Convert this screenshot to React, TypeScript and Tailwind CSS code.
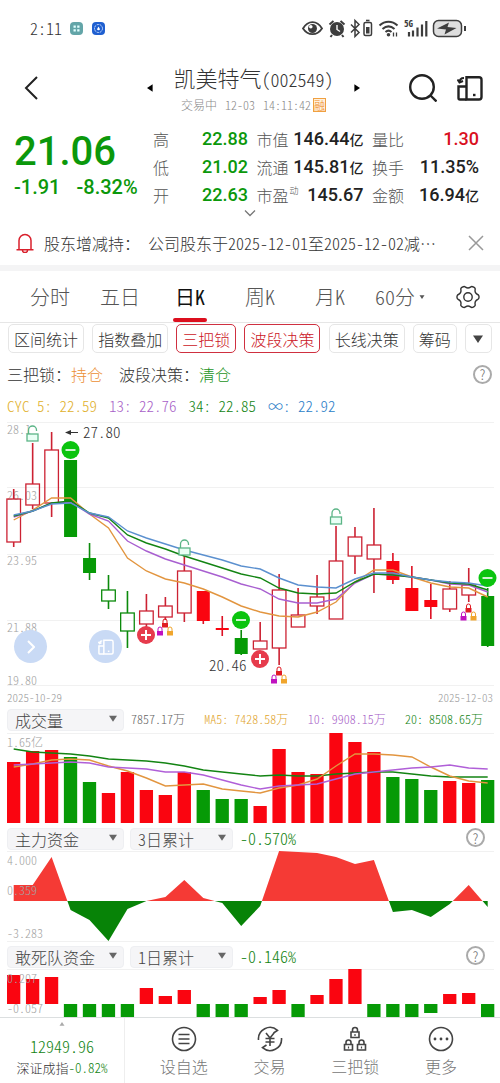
import { useState } from "react";
import type { ReactNode } from "react";

const RED = "#fa0510";
const GREEN = "#069a06";

// [high, top, bottom, low, kind], one entry for each trading day
type Kind = "up" | "down" | "upFill" | "downFill";
type Candle = [number, number, number, number, Kind];

const candles: Candle[] = [
  [489, 499, 542, 547, "up"],
  [443, 484, 505, 509, "up"],
  [432, 450, 503, 517, "up"],
  [460, 460, 537, 537, "downFill"],
  [543, 558, 573, 580, "downFill"],
  [575, 590, 601, 609, "down"],
  [591, 613, 631, 648, "down"],
  [594, 611, 624, 628, "up"],
  [597, 606, 617, 620, "up"],
  [556, 571, 613, 622, "up"],
  [591, 591, 621, 624, "upFill"],
  [616, 628, 630, 636, "upFill"],
  [630, 638, 654, 655, "downFill"],
  [622, 641, 649, 649, "up"],
  [574, 590, 648, 665, "up"],
  [588, 615, 627, 627, "up"],
  [575, 597, 606, 614, "up"],
  [526, 561, 619, 619, "up"],
  [527, 537, 556, 574, "up"],
  [508, 545, 559, 593, "up"],
  [553, 561, 580, 584, "upFill"],
  [566, 588, 611, 611, "upFill"],
  [584, 600, 607, 619, "upFill"],
  [581, 589, 609, 612, "up"],
  [568, 585, 595, 602, "up"],
  [588, 596, 646, 647, "downFill"],
];

const priceLines = [
  { color: "#e2953f", ys: [520, 510, 498, 498, 514, 528, 558, 571, 579, 583, 589, 597, 606, 612, 616, 617, 612, 602, 582, 570, 570, 577, 583, 587, 588, 597] },
  { color: "#a85fd0", ys: [517, 511, 503, 502, 514, 521, 541, 551, 559, 565, 571, 577, 584, 589, 599, 603, 603, 599, 583, 574, 575, 577, 580, 584, 585, 592] },
  { color: "#138413", ys: [516, 511, 503, 501, 513, 518, 535, 543, 549, 556, 562, 568, 574, 578, 588, 593, 594, 593, 582, 574, 575, 577, 580, 583, 584, 590] },
  { color: "#5b90cf", ys: [515, 511, 504, 503, 513, 517, 531, 538, 544, 550, 555, 560, 566, 569, 578, 585, 587, 588, 579, 573, 573, 577, 580, 582, 583, 586] },
];

const volumeTops = [762, 751, 750, 757, 782, 793, 772, 790, 795, 772, 790, 799, 799, 806, 749, 772, 774, 733, 742, 752, 777, 779, 790, 781, 783, 780];
const volumeDown = [3, 4, 10, 11, 12, 20, 21, 22, 25];
const volumeLines = [
  { color: "#138413", ys: [749, 752, 753, 754, 756, 759, 760, 761, 763, 766, 770, 772, 774, 776, 775, 776, 776, 774, 773, 772, 772, 774, 776, 777, 777, 777] },
  { color: "#e2953f", ys: [767, 764, 760, 759, 760, 766, 771, 778, 786, 785, 784, 789, 791, 793, 788, 785, 779, 766, 754, 754, 755, 757, 767, 776, 781, 783] },
  { color: "#b05fd8", ys: [765, 764, 763, 762, 763, 767, 768, 769, 772, 772, 775, 780, 785, 789, 786, 785, 784, 779, 774, 772, 770, 768, 767, 765, 768, 769] },
];

const fundYs = [885, 885, 857, 910, 920, 941, 909, 901, 897, 880, 898, 903, 926, 906, 851, 852, 853, 857, 864, 860, 912, 910, 917, 904, 885, 907];
const squadYs = [975, 979, 977, 1017, 1017, 1017, 1017, 988, 996, 990, 1017, 1017, 1017, 997, 990, 1017, 995, 979, 969, 1017, 1017, 1017, 1013, 994, 993, 1017];

const dayX = (i: number) => 13.7 + i * 18.96;
const toPoints = (ys: number[]) =>
  ys.map((y, i) => `${dayX(i).toFixed(1)},${y}`).join(" ");

const Trend = ({ ys, color }: { ys: number[]; color: string }) => (
  <polyline points={toPoints(ys)} fill="none" stroke={color} strokeWidth="1.4" />
);

const GridLine = ({ y }: { y: number }) => (
  <path d={`M7 ${y}.5H494`} stroke="#f1f1f1" strokeWidth="1" />
);

const AxisText = ({ y, children }: { y: number; children: ReactNode }) => (
  <text x="7" y={y} fontSize="12" fill="#a3a3a3">
    {children}
  </text>
);

const OpenLock = ({ x, y }: { x: number; y: number }) => (
  <g transform={`translate(${x} ${y})`} fill="none" stroke="#5cb587" strokeWidth="1.3">
    <path d="M-4 0v-4a4 4 0 0 1 8 0v1" />
    <rect x="-5.5" y="0" width="11" height="7" fill="#e9fff5" />
  </g>
);

const SmallLock = ({ x, y, color }: { x: number; y: number; color: string }) => (
  <g transform={`translate(${x} ${y})`}>
    <path d="M-2 0v-2a2 2 0 0 1 4 0v2" fill="none" stroke={color} strokeWidth="1" />
    <rect x="-3" y="0" width="6" height="4.5" fill={color} />
  </g>
);

const TripleLock = ({ x, y }: { x: number; y: number }) => (
  <g>
    <SmallLock x={x} y={y - 4} color="#e01c24" />
    <SmallLock x={x - 5} y={y + 4} color="#c012c0" />
    <SmallLock x={x + 5} y={y + 4} color="#f0a52c" />
  </g>
);

const Signal = ({ x, y, buy }: { x: number; y: number; buy?: boolean }) => (
  <g transform={`translate(${x} ${y})`}>
    <circle r="9" fill={buy ? "#e63b4c" : "#0bc40f"} />
    <path
      d={buy ? "M-5 0H5M0-5V5" : "M-5 0H5"}
      stroke="#fff"
      strokeWidth={buy ? 2 : 1.6}
      fill="none"
    />
  </g>
);

const CandleChart = () => (
  <svg viewBox="0 418 500 272" className="block w-full">
    {[422, 487, 554, 620, 685].map((y) => (
      <GridLine key={y} y={y} />
    ))}
    <AxisText y={434}>28.1</AxisText>
    <AxisText y={500}>26.03</AxisText>
    <AxisText y={565}>23.95</AxisText>
    <AxisText y={632}>21.88</AxisText>
    <AxisText y={685}>19.80</AxisText>
    {candles.map(([high, top, bottom, low, kind], i) => {
      const x = dayX(i);
      const up = kind.startsWith("up");
      const filled = kind.endsWith("Fill");
      const stroke = up ? (filled ? "#dd1023" : "#cc2233") : "#0b8a0b";
      return (
        <g key={i}>
          <path
            d={`M${x} ${high}V${top}M${x} ${bottom}V${low}`}
            stroke={stroke}
            strokeWidth="1.6"
          />
          {filled ? (
            <rect x={x - 6.5} y={top} width="13" height={bottom - top} fill={up ? RED : GREEN} />
          ) : (
            <rect
              x={x - 6.8}
              y={top}
              width="13.6"
              height={bottom - top}
              fill="none"
              stroke={stroke}
              strokeWidth="1.3"
            />
          )}
        </g>
      );
    })}
    {priceLines.map((line) => (
      <Trend key={line.color} {...line} />
    ))}
    <OpenLock x={32.5} y={434} />
    <OpenLock x={184.5} y={548} />
    <OpenLock x={336} y={517} />
    <TripleLock x={165} y={627} />
    <TripleLock x={279} y={675} />
    <TripleLock x={468.5} y={612} />
    <Signal x={70.5} y={450} />
    <Signal x={241} y={620} />
    <Signal x={487.5} y={578} />
    <Signal x={146} y={635} buy />
    <Signal x={260} y={659} buy />
    <path d="M68 432.5H78" stroke="#333" />
    <path d="M65 432.5l6-2.5v5z" fill="#333" />
    <text x="83" y="438" fontSize="15" fill="#333">
      27.80
    </text>
    <text x="209" y="671" fontSize="15" fill="#333">
      20.46
    </text>
  </svg>
);

const VolumeChart = () => (
  <svg viewBox="0 733 500 91" className="block w-full">
    <GridLine y={733} />
    <AxisText y={747}>1.65亿</AxisText>
    {volumeTops.map((y, i) => (
      <rect
        key={i}
        x={dayX(i) - 6.7}
        y={y}
        width="13.3"
        height={823 - y}
        fill={volumeDown.includes(i) ? GREEN : RED}
      />
    ))}
    {volumeLines.map((line) => (
      <Trend key={line.color} {...line} />
    ))}
  </svg>
);

const FundChart = () => {
  const area = `${dayX(0)},901 ${toPoints(fundYs)} ${dayX(25)},901`;
  return (
    <svg viewBox="0 851 500 91" className="block w-full">
      <clipPath id="inflow">
        <rect x="0" y="851" width="500" height="50" />
      </clipPath>
      <clipPath id="outflow">
        <rect x="0" y="901" width="500" height="41" />
      </clipPath>
      <GridLine y={851} />
      <GridLine y={941} />
      <polygon points={area} fill="#f53a35" clipPath="url(#inflow)" />
      <polygon points={area} fill="#078307" clipPath="url(#outflow)" />
      <AxisText y={865}>4.000</AxisText>
      <AxisText y={895}>0.359</AxisText>
      <AxisText y={938}>-3.283</AxisText>
    </svg>
  );
};

const SquadChart = () => (
  <svg viewBox="0 969 500 48" className="block w-full">
    <GridLine y={969} />
    {squadYs.map((y, i) => (
      <rect
        key={i}
        x={dayX(i) - 6.7}
        y={Math.min(y, 1004)}
        width="13.3"
        height={Math.abs(y - 1004)}
        fill={y > 1004 ? GREEN : RED}
      />
    ))}
    <AxisText y={983}>0.207</AxisText>
    <AxisText y={1013}>-0.057</AxisText>
  </svg>
);

const Triangle = ({ className }: { className?: string }) => (
  <svg viewBox="0 0 10 8" className={className} fill="currentColor">
    <path d="M0 .5h10L5 8z" />
  </svg>
);

const FoldIcon = ({ className }: { className?: string }) => (
  <svg viewBox="0 0 26 26" className={className} fill="none" stroke="currentColor" strokeWidth="2.4">
    <path d="M9.5 24.5V2.2H22a2.5 2.5 0 0 1 2.500 2.500V22a2.5 2.5 0 0 1-2.500 2.500z" />
    <path d="M9.500 24.500H3A1.500 1.500 0 0 1 1.500 23V11.500h8" />
    <path d="M2.500 7.500C2.500 5 4 3 7 3M.5 4.500l2 3 3.500-1.500" strokeWidth="2" />
    <path d="M16 20h2.500" />
  </svg>
);

const StatusIcons = () => (
  <svg viewBox="0 0 170 24" className="h-6 w-[170px] text-[#3d3d3d]" fill="none" stroke="currentColor">
    {/* eye */}
    <path d="M4 12.5C9 4 18 4 23 12.5 18 20 9 20 4 12.5z" strokeWidth="1.8" />
    <circle cx="13.5" cy="12.5" r="4.5" fill="currentColor" stroke="none" />
    <circle cx="11.8" cy="10.8" r="1.8" fill="#fff" stroke="none" />
    {/* alarm */}
    <circle cx="38" cy="13" r="7" fill="currentColor" stroke="none" />
    <path d="M30.5 8.5l4-3.5M45.5 8.5l-4-3.5M33 19l-1.5 2M43 19l1.5 2" strokeWidth="2" />
    <path d="M38 9v4.5l3 2" stroke="#fff" strokeWidth="1.4" />
    {/* bluetooth with its battery */}
    <path d="M52 8.5l8 8-4 4v-16l4 4-8 8" strokeWidth="1.5" />
    <rect x="65" y="6.5" width="7.5" height="13" rx="1.5" strokeWidth="1.5" />
    <path d="M67 4.5h3.5" strokeWidth="1.6" />
    <rect x="67" y="11" width="3.5" height="6.5" fill="currentColor" stroke="none" />
    {/* wifi */}
    <path d="M80.5 9.5c5.5-5 12.5-5 18 0M83.5 13c4-3.5 8-3.5 12 0M86.500 16c2-1.8 4-1.8 6 0" strokeWidth="2" />
    <circle cx="89.5" cy="18.8" r="1.8" fill="currentColor" stroke="none" />
    <path d="M94.5 16.5v4M97.5 16.5v4" strokeWidth="1.3" />
    {/* signal */}
    <path d="M110 20.5V16M114 20.5v-6M118.5 20.5v-9M123 20.5v-12M127.3 20.5V5" strokeWidth="2.2" />
    <text x="105" y="11" fontSize="9" fontWeight="700" fill="currentColor" stroke="none">
      5G
    </text>
    {/* battery */}
    <rect x="134.5" y="4.5" width="28" height="16" rx="5" fill="#dedede" strokeWidth="1.5" />
    <path d="M166 10v5" strokeWidth="2" />
    <path d="M138 12.5l12-6-1.5 4.5 9 1-12 6.5 1.5-5z" fill="currentColor" stroke="none" />
  </svg>
);

const GearIcon = () => (
  <svg viewBox="0 0 24 24" className="h-6 w-6 text-[#333]" fill="none" stroke="currentColor" strokeWidth="1.4" strokeLinejoin="round">
    <path d="M8.2 1.5c1.2 0 1.6 1.5 3.8 1.5s2.6-1.5 3.8-1.5c1 0 3 1.2 3.3 2 .4 1-.7 2.2.4 4.2s2.6 1.6 3.1 2.6c.4.8.4 2.6 0 3.4-.5 1-2 .6-3.1 2.6s0 3.2-.4 4.2c-.3.8-2.3 2-3.3 2-1.2 0-1.600-1.5-3.8-1.5s-2.6 1.5-3.8 1.5c-1 0-3-1.2-3.3-2-.4-1 .7-2.2-.4-4.2s-2.6-1.6-3.1-2.6c-.4-.8-.4-2.6 0-3.4.5-1 2-.6 3.1-2.6s0-3.2.4-4.2c.3-.8 2.3-2 3.3-2z" />
    <circle cx="12" cy="12" r="4.2" />
  </svg>
);

const HelpButton = () => (
  <button
    aria-label="说明"
    className="flex h-[19px] w-[19px] items-center justify-center rounded-full border-2 border-[#aaa] text-sm leading-none text-[#777]"
  >
    ?
  </button>
);

const Picker = ({ label, options, wide }: { label: string; options: string[]; wide?: boolean }) => (
  <div className={`relative h-[22px] ${wide ? "w-[117px]" : "w-[103px]"}`}>
    <select
      aria-label={label}
      className="h-full w-full appearance-none rounded-sm border border-[#eeeff2] bg-[#f5f5f7] pl-[7px] text-base leading-5 text-[#444]"
    >
      {options.map((option) => (
        <option key={option}>{option}</option>
      ))}
    </select>
    <Triangle className="pointer-events-none absolute top-[7px] right-[7px] h-[7px] w-2 text-[#666]" />
  </div>
);

const Stat = ({ label, note, value, unit, tone = "text-[#222]" }: {
  label: string;
  note?: string;
  value: string;
  unit?: string;
  tone?: string;
}) => (
  <div className="flex items-center justify-between whitespace-nowrap">
    <dt className="flex text-base leading-7 text-[#555]">
      {label}
      {note && <span className="ml-px text-[9px] leading-5">{note}</span>}
    </dt>
    <dd className={`font-[Roboto] text-lg leading-7 font-medium ${tone}`}>
      {value}
      {unit && <span className="font-['Noto_Sans_CJK_SC'] text-sm">{unit}</span>}
    </dd>
  </div>
);

const stats = [
  { label: "高", value: "22.88", tone: "text-[#0b980b]" },
  { label: "市值", value: "146.44", unit: "亿" },
  { label: "量比", value: "1.30", tone: "text-[#d9101e]" },
  { label: "低", value: "21.02", tone: "text-[#0b980b]" },
  { label: "流通", value: "145.81", unit: "亿" },
  { label: "换手", value: "11.35%" },
  { label: "开", value: "22.63", tone: "text-[#0b980b]" },
  { label: "市盈", note: "动", value: "145.67" },
  { label: "金额", value: "16.94", unit: "亿" },
];

const tabs = ["分时", "五日", "日K", "周K", "月K"];
const chips = ["区间统计", "指数叠加", "三把锁", "波段决策", "长线决策", "筹码"];

const navItems = [
  {
    label: "设自选",
    icon: (
      <>
        <circle cx="13" cy="13" r="11.5" />
        <path d="M7.5 8.5h11M7.5 13h11M7.5 17.5h11" />
      </>
    ),
  },
  {
    label: "交易",
    icon: (
      <>
        <path d="M1.5 14A11.500 11.500 0 0 1 20.5 4.300L16.500 7M24.500 12A11.500 11.500 0 0 1 5.500 21.700L9.500 19" />
        <path d="M9 7l4 5 4-5M13 12v8M8.5 12.500h9M8.5 16h9" />
      </>
    ),
  },
  {
    label: "三把锁",
    icon: (
      <>
        <path d="M9 6h8v5.5H9zM10.5 6V4a2.5 2.5 0 0 1 5 0v2" />
        <path d="M2.5 18.5h8V24h-8zM4 18.5v-2a2.5 2.5 0 0 1 5 0v2" />
        <path d="M15.5 18.5h8V24h-8zM17 18.5v-2a2.5 2.5 0 0 1 5 0v2" />
        <path d="M13 8v2M6.5 20.5v2M19.5 20.5v2" strokeWidth="1.2" />
      </>
    ),
  },
  {
    label: "更多",
    icon: (
      <>
        <circle cx="13" cy="13" r="11.5" />
        <path d="M7 13h.01M13 13h.01M19 13h.01" strokeWidth="2.8" strokeLinecap="round" />
      </>
    ),
  },
];

export default function App() {
  const [tab, setTab] = useState("日K");
  const [active, setActive] = useState(["三把锁", "波段决策"]);

  const toggleChip = (chip: string) =>
    setActive((list) =>
      list.includes(chip) ? list.filter((c) => c !== chip) : [...list, chip]
    );

  return (
    <div className="w-full overflow-hidden bg-white font-['Noto_Sans_CJK_SC',sans-serif] font-light text-[#333] [font-feature-settings:'hwid']">
      {/* Status bar */}
      <div className="flex h-14 items-center justify-between pr-[31px] pl-[30px]">
        <div className="flex items-center gap-2">
          <span className="text-base">2:11</span>
          <svg viewBox="0 0 13 13" className="h-[13px] w-[13px]">
            <rect width="13" height="13" rx="4" fill="#63a5a8" />
            <path d="M3.5 3.5h2.3v2.3H3.5zM7.2 3.5h2.3v2.3H7.2zM3.5 7.2h2.3v2.3H3.5zM7.2 7.2h2.3v2.3H7.2z" fill="#e2ffff" />
          </svg>
          <svg viewBox="0 0 13 13" className="ml-px h-[13px] w-[13px]">
            <rect width="13" height="13" rx="4" fill="#1f5fd0" />
            <circle cx="6.5" cy="6.5" r="4" fill="none" stroke="#cfe0ff" strokeDasharray="2 .8" />
            <path d="M6.5 4.5L8 7.200a1.600 1.600 0 0 1-3 0z" fill="#fff" />
          </svg>
        </div>
        <StatusIcons />
      </div>

      {/* Header */}
      <header className="grid h-16 grid-cols-[1fr_auto_1fr] items-center pr-[17px] pl-6">
        <button aria-label="返回" className="justify-self-start">
          <svg viewBox="0 0 14 24" className="h-6 w-[14px]" fill="none" stroke="#222" strokeWidth="2">
            <path d="M13 1L2 12l11 11" />
          </svg>
        </button>
        <div className="flex w-[216px] items-center justify-between">
          <button aria-label="上一只">
            <Triangle className="h-[6px] w-2 rotate-90 text-black" />
          </button>
          <div className="pt-1 text-center whitespace-nowrap">
            <h1 className="text-[22px] leading-7">
              凯美特气<span className="text-lg">(002549)</span>
            </h1>
            <p className="flex items-center justify-center text-xs leading-6 text-[#888]">
              <span className="mr-2">交易中</span>
              <span className="mr-2">12-03</span>
              <span>14:11:42</span>
              <span className="ml-[2px] border border-[#f0a040] bg-[#fff0dc] text-[11px] leading-3 text-[#ee8a1d]">融</span>
            </p>
          </div>
          <button aria-label="下一只">
            <Triangle className="h-[6px] w-2 -rotate-90 text-black" />
          </button>
        </div>
        <div className="flex items-center gap-5 justify-self-end text-[#222]">
          <button aria-label="搜索">
            <svg viewBox="0 0 28 28" className="h-7 w-7" fill="none" stroke="currentColor" strokeWidth="2.4">
              <circle cx="13" cy="13" r="11.8" />
              <path d="M21.500 21.500l6 6" />
            </svg>
          </button>
          <button aria-label="分屏">
            <FoldIcon className="h-[26px] w-[26px]" />
          </button>
        </div>
      </header>

      {/* Quote */}
      <section className="flex justify-between pt-[5px] pr-[21px] pl-[14px]">
        <div className="pt-[3px] font-[Roboto] font-medium whitespace-nowrap text-[#0b980b]">
          <div className="text-[40px] leading-[47px]">21.06</div>
          <div className="flex gap-4 text-xl leading-6">
            <span>-1.91</span>
            <span>-8.32%</span>
          </div>
        </div>
        <dl className="grid w-[326px] grid-cols-[95px_107px_107px] justify-between self-start">
          {stats.map((stat) => (
            <Stat key={stat.label} {...stat} />
          ))}
        </dl>
      </section>
      <button aria-label="展开" className="mx-auto mb-1 block h-2 w-3">
        <svg viewBox="0 0 12 8" className="h-2 w-3" fill="none" stroke="#777" strokeWidth="1.3">
          <path d="M1 1.5l5 5 5-5" />
        </svg>
      </button>

      {/* Notice */}
      <div className="flex h-11 items-center px-4">
        <svg viewBox="0 0 18 20" className="h-5 w-[18px] shrink-0" fill="none" stroke="#d9202c" strokeWidth="1.5">
          <path d="M3 16.500V7.500a6 6 0 0 1 12 0v9M.5 16.700h17M6.500 17.500a2.500 2 0 0 0 5 0" />
        </svg>
        <p className="ml-[10px] flex flex-1 gap-2 text-base whitespace-nowrap">
          <span>股东增减持：</span>
          <span>公司股东于2025-12-01至2025-12-02减…</span>
        </p>
        <button aria-label="关闭">
          <svg viewBox="0 0 16 16" className="h-4 w-4" fill="none" stroke="#999" strokeWidth="1.5">
            <path d="M1 1l14 14M15 1L1 15" />
          </svg>
        </button>
      </div>
      <div className="h-[6px] bg-[#f4f4f5]" />

      {/* Period tabs */}
      <nav className="grid h-[52px] grid-cols-[repeat(6,14fr)_13fr] border-b border-[#e6e6e6] pl-[15px] text-xl text-[#555]">
        {tabs.map((name) => (
          <button
            key={name}
            onClick={() => setTab(name)}
            className={`grid grid-rows-[1fr_4px] place-items-center pt-1 ${tab === name ? "font-normal text-[#111]" : ""}`}
          >
            {name}
            <span className={`h-1 w-[34px] rounded-full ${tab === name ? "bg-[#dc0f1e]" : ""}`} />
          </button>
        ))}
        <div className="flex items-center justify-center">
          <select aria-label="分钟周期" className="appearance-none bg-transparent">
            <option>60分</option>
            <option>30分</option>
          </select>
          <Triangle className="ml-1 h-1 w-[6px]" />
        </div>
        <button aria-label="设置" className="flex items-center justify-center">
          <GearIcon />
        </button>
      </nav>

      {/* Indicator chips */}
      <div className="flex justify-between px-2 pt-px">
        {chips.map((chip) => (
          <button
            key={chip}
            onClick={() => toggleChip(chip)}
            className={`h-[29px] rounded-[5px] border px-[5px] text-base whitespace-nowrap ${
              active.includes(chip) ? "border-[#cf3040] text-[#cc1626]" : "border-[#e6e6e6]"
            }`}
          >
            {chip}
          </button>
        ))}
        <button aria-label="更多指标" className="flex h-[29px] w-[27px] items-center justify-center rounded-[5px] border border-[#e6e6e6]">
          <Triangle className="h-2 w-[10px] text-[#444]" />
        </button>
      </div>

      <div className="flex h-[42px] items-center justify-between pr-2 pl-[7px] text-base">
        <div className="flex gap-4">
          <span>
            三把锁：<span className="text-[#ec8f35]">持仓</span>
          </span>
          <span>
            波段决策：<span className="text-[#1c941c]">清仓</span>
          </span>
        </div>
        <HelpButton />
      </div>

      <div className="flex h-[23px] items-center gap-3 pl-[7px] text-[15px] whitespace-pre">
        <span className="text-[#dfb02c]">CYC 5: 22.59</span>
        <span className="text-[#a85fc8]">13: 22.76</span>
        <span className="text-[#138413]">34: 22.85</span>
        <span className="text-[#2a7ec8]">∞: 22.92</span>
      </div>

      {/* Candles, with two floating shortcuts on top */}
      <div className="relative">
        <CandleChart />
        <button
          aria-label="展开面板"
          className="absolute bottom-[27px] left-[14px] flex h-[33px] w-[33px] items-center justify-center rounded-full bg-[#c9daf5]"
        >
          <svg viewBox="0 0 8 14" className="h-[14px] w-2" fill="none" stroke="#fff" strokeWidth="2">
            <path d="M1 1l6 6-6 6" />
          </svg>
        </button>
        <button
          aria-label="分屏对比"
          className="absolute bottom-[27px] left-[89px] flex h-[33px] w-[33px] items-center justify-center rounded-full bg-[#c9daf5] text-white"
        >
          <FoldIcon className="h-4 w-4" />
        </button>
      </div>
      <div className="flex h-[14px] items-center justify-between px-[7px] text-[11px] leading-none text-[#999]">
        <span>2025-10-29</span>
        <span>2025-12-03</span>
      </div>

      {/* Volume */}
      <div className="flex h-[29px] items-center pr-[17px] pl-[7px]">
        <Picker wide label="成交量指标" options={["成交量", "成交额"]} />
        <div className="ml-[7px] flex flex-1 justify-between text-xs whitespace-pre">
          <span className="text-[#666]">7857.17万</span>
          <span className="text-[#dfa52c]">MA5: 7428.58万</span>
          <span className="text-[#a85fc8]">10: 9908.15万</span>
          <span className="text-[#138413]">20: 8508.65万</span>
        </div>
      </div>
      <VolumeChart />

      {/* Main fund */}
      <div className="flex h-[27px] items-center pr-[15px] pl-[7px]">
        <Picker wide label="资金指标" options={["主力资金"]} />
        <div className="ml-[6px]">
          <Picker label="主力资金周期" options={["3日累计", "1日累计"]} />
        </div>
        <span className="ml-[7px] flex-1 text-base text-[#138413]">-0.570%</span>
        <HelpButton />
      </div>
      <FundChart />

      {/* Hot money */}
      <div className="flex h-[27px] items-center pr-[15px] pl-[7px]">
        <Picker wide label="敢死队指标" options={["敢死队资金"]} />
        <div className="ml-[6px]">
          <Picker label="敢死队周期" options={["1日累计", "3日累计"]} />
        </div>
        <span className="ml-[7px] flex-1 text-base text-[#138413]">-0.146%</span>
        <HelpButton />
      </div>
      <SquadChart />

      {/* Bottom bar */}
      <footer className="flex h-[66px] border-t border-[#dcdfe0]">
        <button className="flex w-[125px] flex-col items-center border-r border-[#eee] pt-1 whitespace-nowrap">
          <Triangle className="h-1 w-[6px] rotate-180 text-[#aaa]" />
          <span className="mt-2 text-base leading-6 text-[#138413]">12949.96</span>
          <span className="flex items-center text-[13px] leading-5">
            深证成指<span className="text-[#138413]">-0.82%</span>
          </span>
        </button>
        <nav className="grid flex-1 grid-cols-4 px-4">
          {navItems.map(({ label, icon }) => (
            <button key={label} className="flex flex-col items-center pt-2 text-base leading-7 text-[#777]">
              <svg viewBox="0 0 26 26" className="h-[26px] w-[26px] shrink-0 text-[#444]" fill="none" stroke="currentColor" strokeWidth="1.6">
                {icon}
              </svg>
              {label}
            </button>
          ))}
        </nav>
      </footer>
    </div>
  );
}
